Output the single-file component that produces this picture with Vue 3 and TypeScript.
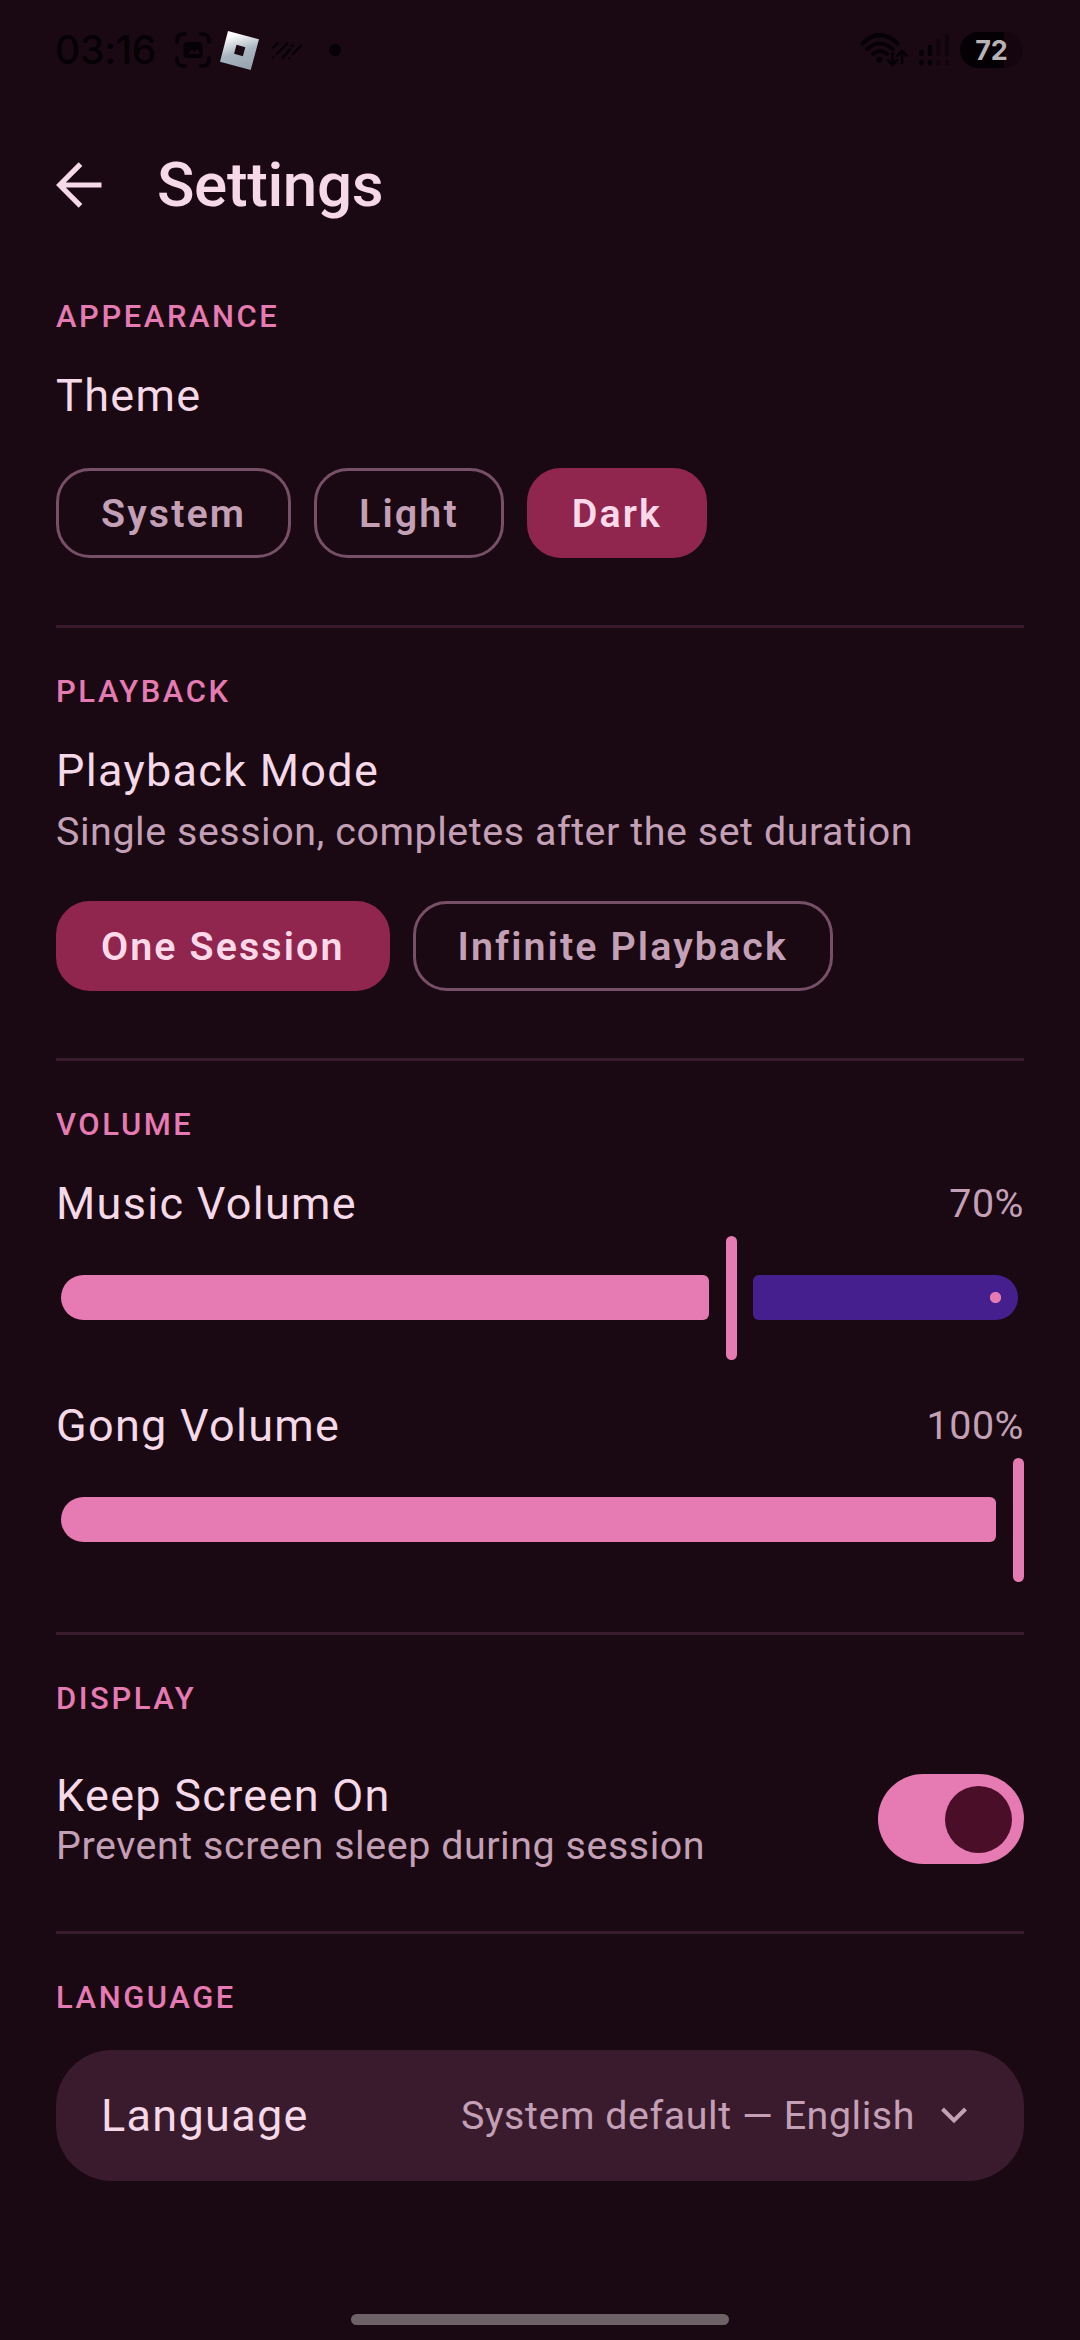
<script setup lang="ts">
import { ref } from 'vue'

interface Volume {
  name: string
  value: number
}

const themes: string[] = ['System', 'Light', 'Dark']
const modes: string[] = ['One Session', 'Infinite Playback']
const theme = ref('Dark')
const mode = ref('One Session')
const keepOn = ref(true)
const volumes = ref<Volume[]>([
  { name: 'Music Volume', value: 70 },
  { name: 'Gong Volume', value: 100 },
])

// Width of the filled track: the handle travels 957px and keeps a 17px gap.
const filled = (v: number): string => `${Math.round((v / 100) * 957 - 22)}px`
</script>

<template>
  <div class="screen">
    <header class="status">
      <span class="clock">03:16</span>
      <svg class="shot" viewBox="0 0 36 36" fill="none" stroke="#060104" stroke-width="3.6" stroke-linecap="round">
        <path d="M2 10V8a6 6 0 0 1 6-6h2M26 2h2a6 6 0 0 1 6 6v2M34 26v2a6 6 0 0 1-6 6h-2M10 34H8a6 6 0 0 1-6-6v-2" />
        <rect x="8.500" y="10" width="19" height="16" rx="4" fill="#060104" stroke="none" />
        <path d="M12.500 22l4-4.500 3 2.500 2.500-3 2.500 3V22z" fill="#1a0913" stroke="none" />
      </svg>
      <svg class="roblox" viewBox="0 0 39 39">
        <defs>
          <linearGradient id="metal" x1="0.300" y1="0" x2="0.600" y2="1">
            <stop offset="0.100" stop-color="#fff" />
            <stop offset="0.550" stop-color="#a9b5c0" />
            <stop offset="1" stop-color="#97a4b0" />
          </linearGradient>
        </defs>
        <path fill="url(#metal)" fill-rule="evenodd" d="M8 0l31 8.300L30.700 39 0 30.700zM16.500 13.800l-2.400 9 8.800 2.400 2.400-9z" />
      </svg>
      <svg class="stripes" viewBox="0 0 32 18" stroke="#060104" stroke-width="2.300" stroke-linecap="round">
        <path d="M2 5.600l4.500-4.100M1.700 15.700l.4-.4M6 12L16 1.600M12 15.500l7-8M21.300 3.900l.5-.5M18.200 16.700l.4-.5M22 12l8-8.500" />
      </svg>
      <i class="dot"></i>
      <span class="grow"></span>
      <svg class="wifi" viewBox="0 0 48 34" fill="none" stroke="#060104" stroke-width="4" stroke-linecap="round">
        <path d="M2.500 10.500q17-17 35 0M7.500 16q12-11 25 0M13 21q7-6 14 0" />
        <circle cx="19.500" cy="26.500" r="3" fill="#060104" stroke="none" />
        <path stroke-width="2.600" d="M32.500 20v11.500M28 27.500l4.500 4.500 4.500-4.500M42 30V18.500M37.500 22.500L42 18l4.500 4.500" />
      </svg>
      <svg class="signal" viewBox="0 0 30 34" stroke="#060104" stroke-width="4.400" stroke-linecap="round">
        <path d="M2.500 19v2M11 14v7M2.500 29v1.500M11 29v1.500" />
        <path stroke="#12040c" d="M19.500 8v13M28 3v18M19.500 29v1.500M28 29v1.500" />
      </svg>
      <span class="battery">72</span>
    </header>

    <div class="bar">
      <svg class="back" viewBox="0 0 46 46" fill="none" stroke="#f6d9e8" stroke-width="5.200">
        <path d="M45.500 23H4M24.500 2.200L3.700 23l20.800 20.800" />
      </svg>
      <h1>Settings</h1>
    </div>

    <section>
      <h2>APPEARANCE</h2>
      <div class="title">Theme</div>
      <div class="chips first">
        <button v-for="t in themes" :key="t" class="chip" :class="{ on: t === theme }" @click="theme = t">{{ t }}</button>
      </div>
    </section>

    <section>
      <h2>PLAYBACK</h2>
      <div class="title">Playback Mode</div>
      <div class="sub">Single session, completes after the set duration</div>
      <div class="chips">
        <button v-for="m in modes" :key="m" class="chip" :class="{ on: m === mode }" @click="mode = m">{{ m }}</button>
      </div>
    </section>

    <section class="volume">
      <h2>VOLUME</h2>
      <div v-for="v in volumes" :key="v.name" class="level">
        <div class="row">
          <span class="title">{{ v.name }}</span>
          <span class="sub">{{ v.value }}%</span>
        </div>
        <div class="slider">
          <i class="fill" :style="{ width: filled(v.value) }"></i>
          <i class="handle"></i>
          <i v-if="v.value < 100" class="rest"></i>
        </div>
      </div>
    </section>

    <section class="display">
      <h2>DISPLAY</h2>
      <div class="row">
        <div>
          <div class="title">Keep Screen On</div>
          <div class="sub">Prevent screen sleep during session</div>
        </div>
        <div class="switch" :class="{ on: keepOn }" @click="keepOn = !keepOn"><i></i></div>
      </div>
    </section>

    <section class="language">
      <h2>LANGUAGE</h2>
      <div class="card">
        <span class="title">Language</span>
        <span class="grow"></span>
        <span class="sub">System default — English</span>
        <svg class="chev" viewBox="0 0 26 17" fill="none" stroke="#c4a0b7" stroke-width="4">
          <path d="M1.500 2L13 13.500 24.500 2" />
        </svg>
      </div>
    </section>

    <footer><i></i></footer>
  </div>
</template>

<style>
body {
  margin: 0;
  background: #1a0912;
}
</style>

<style scoped>
.screen {
  box-sizing: border-box;
  width: 1080px;
  height: 2340px;
  display: flex;
  flex-direction: column;
  overflow: hidden;
  background: #1a0912;
  color: #f6d9e8;
  font-family: Roboto, 'Liberation Sans', sans-serif;
}
i {
  display: block;
}
.grow {
  flex: 1;
}
.status {
  height: 100px;
  padding: 0 57px 0 55px;
  display: flex;
  align-items: center;
  color: #060104;
}
.clock {
  width: 120px;
  font: 500 39px/40px Inter, sans-serif;
  letter-spacing: -0.2px;
}
.shot {
  width: 36px;
  height: 36px;
}
.roblox {
  width: 39px;
  height: 39px;
  margin-left: 9px;
}
.stripes {
  width: 32px;
  height: 18px;
  margin: 2px 0 0 12px;
}
.dot {
  width: 12px;
  height: 12px;
  margin-left: 26px;
  border-radius: 50%;
  background: #060104;
}
.wifi {
  width: 48px;
  height: 34px;
}
.signal {
  width: 30px;
  height: 34px;
  margin-left: 11px;
}
.battery {
  width: 63px;
  height: 36px;
  margin-left: 11px;
  border-radius: 18px;
  background: linear-gradient(90deg, #050003 44px, #14050f 44px);
  color: #b9b3b7;
  font: 700 27px/37px Inter, sans-serif;
  text-align: center;
}
.bar {
  height: 194px;
  display: flex;
  align-items: flex-start;
  padding-left: 56px;
}
.back {
  width: 46px;
  height: 46px;
  margin-top: 62px;
}
h1 {
  margin: 46px 0 0 55px;
  font-size: 61.9px;
  font-weight: 500;
  line-height: 78px;
  letter-spacing: -0.35px;
}
section {
  margin: 0 56px;
  padding: 41px 0 67px;
  border-bottom: 3px solid #381b2c;
}
.bar + section {
  padding-top: 0;
}
h2 {
  margin: 0 0 23px;
  font-size: 30.94px;
  font-weight: 500;
  line-height: 45px;
  letter-spacing: 2.58px;
  color: #e67ab3;
}
.title {
  font-size: 45px;
  line-height: 68px;
  letter-spacing: 1.3px;
}
.sub {
  font-size: 39.4px;
  line-height: 56px;
  letter-spacing: 0.56px;
  color: #c4a0b7;
}
.title + .sub {
  margin-top: -1px;
}
.chips {
  display: flex;
  gap: 23px;
  margin-top: 41px;
}
.chips.first {
  margin-top: 38px;
}
.chip {
  box-sizing: border-box;
  height: 90px;
  padding: 1px 42px 0;
  border: 3px solid #775068;
  border-radius: 34px;
  background: none;
  color: #c4a0b7;
  font: 600 39.4px/83px Roboto, sans-serif;
  letter-spacing: 2.1px;
}
.chip.on {
  border-color: #90264e;
  background: #90264e;
  color: #ffd9ea;
}
.row {
  display: flex;
  align-items: center;
  justify-content: space-between;
}
.volume {
  padding-bottom: 50px;
}
.level .row {
  height: 66px;
}
.level .title {
  margin-top: 2px;
}
.level .sub {
  margin-top: 2px;
}
.level + .level {
  margin-top: 32px;
}
.slider {
  height: 124px;
  display: flex;
  align-items: flex-start;
  padding: 0 0 0 5px;
}
.fill {
  height: 45px;
  margin-top: 39px;
  border-radius: 22.5px 6px 6px 22.5px;
  background: #e67ab3;
}
.handle {
  width: 11px;
  height: 124px;
  margin-left: 17px;
  border-radius: 6px;
  background: #e67ab3;
}
.rest {
  box-sizing: border-box;
  flex: 1;
  height: 45px;
  margin: 39px 6px 0 16px;
  border-radius: 6px 22.5px 22.5px 6px;
  background: radial-gradient(circle at calc(100% - 22.5px) 22.5px, #e67ab3 5.2px, #461f8f 6px);
}
.display {
  padding-bottom: 62px;
}
.display h2 {
  margin-bottom: 48px;
}
.display .title {
  line-height: 54px;
}
.display .sub {
  margin: 0;
  line-height: 46px;
}
.switch {
  box-sizing: border-box;
  width: 146px;
  height: 90px;
  padding: 0 12px;
  display: flex;
  align-items: center;
  border-radius: 45px;
  background: #351b2b;
}
.switch.on {
  justify-content: flex-end;
  background: #e67ab3;
}
.switch i {
  width: 67px;
  height: 67px;
  border-radius: 50%;
  background: #4a0e28;
}
.language {
  padding-bottom: 0;
  border: 0;
}
.language h2 {
  margin-bottom: 30px;
}
.card {
  height: 131px;
  display: flex;
  align-items: center;
  padding: 0 57px 0 45px;
  border-radius: 56px;
  background: #3a1b2e;
}
.chev {
  width: 26px;
  height: 17px;
  margin-left: 26px;
}
footer {
  margin-top: auto;
  padding-bottom: 15px;
}
footer i {
  width: 378px;
  height: 11px;
  margin: 0 auto;
  border-radius: 6px;
  background: #6e6267;
}
</style>
